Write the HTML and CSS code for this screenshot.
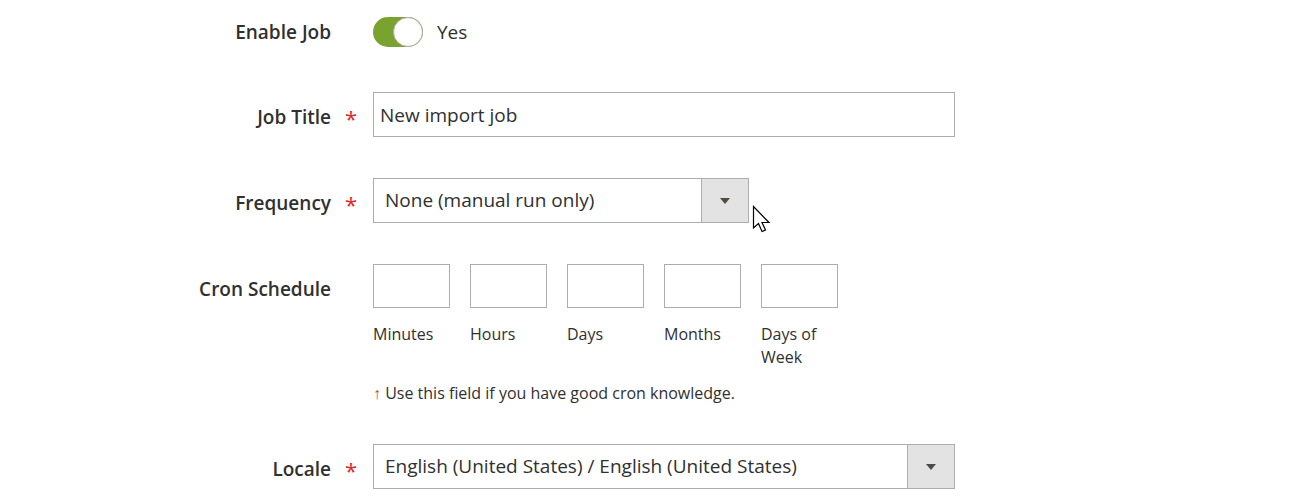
FILE: index.html
```html
<!DOCTYPE html>
<html lang="en">
<head>
    <meta charset="UTF-8">
    <title>New import job</title>
    <link rel="stylesheet" href="styles.css">
</head>
<body>

    <form class="job-form">
        <div class="field field-enable">
            <label class="field-label">Enable Job</label>
            <span class="field-req"></span>
            <div class="field-control toggle-wrap">
                <span class="toggle"><span class="toggle-knob"></span></span>
                <span class="toggle-text">Yes</span>
            </div>
        </div>

        <div class="field">
            <label class="field-label" for="title">Job Title</label>
            <span class="field-req">*</span>
            <div class="field-control">
                <input class="text-input wide" type="text" id="title" value="New import job">
            </div>
        </div>

        <div class="field">
            <label class="field-label">Frequency</label>
            <span class="field-req">*</span>
            <div class="field-control">
                <div class="select select-mid">
                    <span class="select-value">None (manual run only)</span>
                    <span class="select-btn"><span class="caret"></span></span>
                </div>
                <svg class="cursor" width="20" height="30" viewBox="0 0 20 30">
                    <path d="M1.5 1.5 L1.5 23 L6.5 18.5 L10 26.5 L13.5 25 L10 17.5 L17 17.5 Z" fill="#fff" stroke="#000" stroke-width="1.2" stroke-linejoin="miter"/>
                </svg>
            </div>
        </div>

        <div class="field field-cron">
            <label class="field-label">Cron Schedule</label>
            <span class="field-req"></span>
            <div class="field-control">
                <div class="cron-row">
                    <div class="cron-item"><input class="cron-input" type="text"><span class="cron-label">Minutes</span></div>
                    <div class="cron-item"><input class="cron-input" type="text"><span class="cron-label">Hours</span></div>
                    <div class="cron-item"><input class="cron-input" type="text"><span class="cron-label">Days</span></div>
                    <div class="cron-item"><input class="cron-input" type="text"><span class="cron-label">Months</span></div>
                    <div class="cron-item"><input class="cron-input" type="text"><span class="cron-label">Days of Week</span></div>
                </div>
                <p class="field-note"><span class="note-arrow">&uarr;</span> Use this field if you have good cron knowledge.</p>
            </div>
        </div>

        <div class="field">
            <label class="field-label">Locale</label>
            <span class="field-req">*</span>
            <div class="field-control">
                <div class="select wide">
                    <span class="select-value">English (United States) / English (United States)</span>
                    <span class="select-btn"><span class="caret"></span></span>
                </div>
            </div>
        </div>
    </form>

</body>
</html>
```

FILE: styles.css
```css
* {
    margin: 0;
    padding: 0;
    box-sizing: border-box;
}
body {
    font-family: 'Open Sans', sans-serif;
    color: #303030;
    background-color: #fff;
}
.job-form {
    padding-top: 17px;
}
.field {
    display: grid;
    grid-template-columns: 331px 42px 582px;
    align-items: start;
    margin-bottom: 41px;
}
.field-enable {
    margin-bottom: 45px;
}
.field-cron {
    margin-bottom: 40px;
}
.field-label {
    height: 45px;
    font-size: 19px;
    font-weight: 600;
    line-height: 39px;
    padding-top: 6px;
    text-align: right;
    white-space: nowrap;
}
.field-enable .field-label {
    height: 30px;
    line-height: 30px;
    padding-top: 0;
}
.field-req {
    height: 45px;
    color: #e22626;
    font-size: 22px;
    line-height: 40px;
    padding-top: 6px;
    padding-left: 14px;
}
.field-enable .field-req {
    height: 30px;
    padding: 0;
}
.field-control {
    position: relative;
}
.toggle-wrap {
    display: flex;
    align-items: center;
    gap: 14px;
    height: 30px;
}
.toggle {
    position: relative;
    display: block;
    width: 50px;
    height: 30px;
    border-radius: 15px;
    background-color: #79a22e;
}
.toggle-knob {
    position: absolute;
    top: 0;
    right: 0;
    width: 30px;
    height: 30px;
    border-radius: 50%;
    background-color: #fff;
    border: 1px solid #adadad;
}
.toggle-text {
    font-size: 19px;
}
.text-input {
    display: block;
    height: 45px;
    padding: 0 6px;
    font-family: inherit;
    font-size: 19px;
    color: #303030;
    border: 1px solid #adadad;
    background-color: #fff;
    outline: none;
}
.wide {
    width: 582px;
}
.select {
    display: flex;
    height: 45px;
    border: 1px solid #adadad;
    background-color: #fff;
}
.select-mid {
    width: 376px;
}
.select-value {
    flex: 1;
    font-size: 19px;
    line-height: 43px;
    padding-left: 11px;
    white-space: nowrap;
}
.select-btn {
    display: flex;
    align-items: center;
    justify-content: center;
    width: 47px;
    border-left: 1px solid #adadad;
    background-color: #e3e3e3;
}
.caret {
    width: 0;
    height: 0;
    border-left: 5.5px solid transparent;
    border-right: 5.5px solid transparent;
    border-top: 6px solid #514943;
}
.cursor {
    position: absolute;
    left: 379px;
    top: 27px;
}
.cron-row {
    display: flex;
    gap: 20px;
}
.cron-item {
    width: 77px;
}
.cron-input {
    display: block;
    width: 77px;
    height: 44px;
    border: 1px solid #adadad;
    outline: none;
}
.cron-label {
    display: block;
    margin-top: 15px;
    font-size: 16px;
    line-height: 23px;
}
.field-note {
    margin-top: 13px;
    font-size: 16px;
    line-height: 22px;
}
.note-arrow {
    color: #b5542a;
}
```
